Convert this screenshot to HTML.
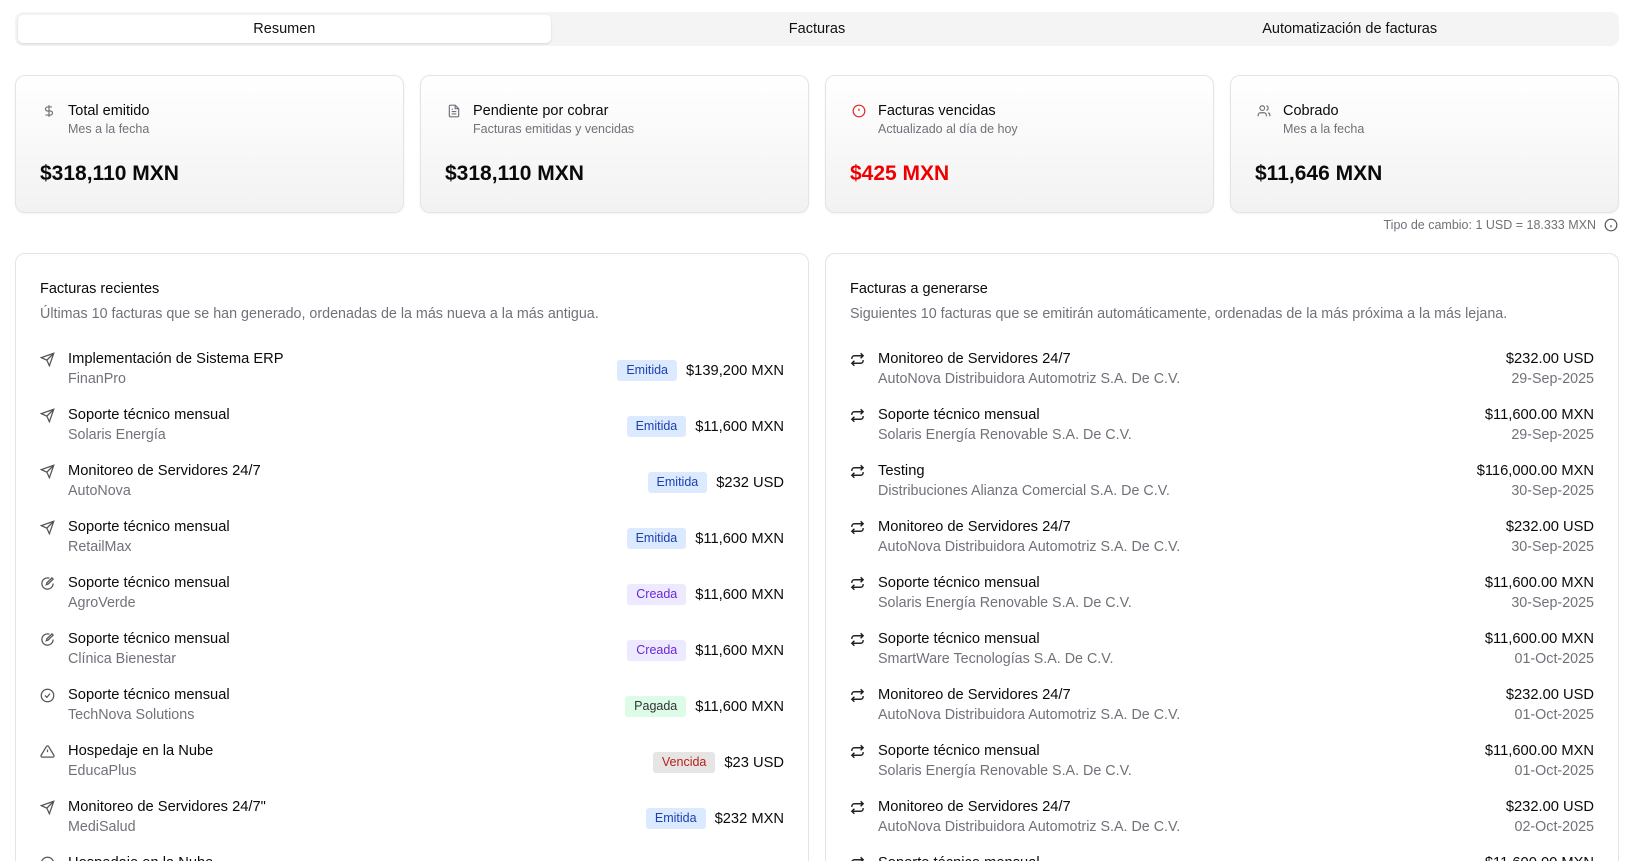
<!DOCTYPE html>
<html><head><meta charset="utf-8"><style>
*{box-sizing:border-box;margin:0;padding:0}
html,body{width:1634px;height:861px;overflow:hidden}
body{background:#fff;font-family:"Liberation Sans",Arial,sans-serif;color:#0a0a0a}
#w{position:relative;width:1634px;height:861px;overflow:hidden}
.tabs{position:absolute;left:15px;top:12px;width:1604px;height:34px;background:#f4f4f5;border-radius:8px;display:flex;padding:3px}
.tab{flex:1;text-align:center;font-size:14.5px;line-height:28px;color:#111}
.tab.active{background:#fff;border-radius:5px;box-shadow:0 1px 2px rgba(0,0,0,.12)}
.card{position:absolute;top:75px;width:389px;height:138px;border:1px solid #e4e4e7;border-radius:10px;background:linear-gradient(#fff,#f2f2f2);box-shadow:0 1px 2px rgba(0,0,0,.05)}
.card .ic{position:absolute;left:26px;top:28px;width:14px;height:14px}
.card .t{position:absolute;left:52px;top:27px;font-size:14.5px}
.card .s{position:absolute;left:52px;top:46px;font-size:12.5px;color:#71717a}
.card .v{position:absolute;left:24px;top:86px;font-size:21px;font-weight:bold}
.fx{position:absolute;right:38px;top:218px;font-size:12.5px;color:#71717a}
.fxi{position:absolute;left:1604px;top:218px}
.panel{position:absolute;top:253px;height:640px;border:1px solid #e4e4e7;border-radius:10px;background:#fff}
.panel h3{position:absolute;left:24px;top:27px;font-size:14.5px;font-weight:normal}
.panel .d{position:absolute;left:24px;top:52px;font-size:14.3px;color:#71717a}
.row{position:absolute;left:24px;right:24px;height:44px}
.row .ri{position:absolute;left:0;top:2px}
.row .a{position:absolute;left:28px;top:0;font-size:14.7px;line-height:18px}
.row .b{position:absolute;left:28px;top:20px;font-size:14.3px;color:#71717a;line-height:18px}
.row .r{position:absolute;right:0;top:10px;display:flex;align-items:center;gap:9px;font-size:14.7px}
.bd{font-size:12.5px;padding:3px 9px;border-radius:3px;line-height:15px}
.em{background:#dbeafe;color:#1e40af}.cr{background:#ede9fe;color:#6d28d9}.pg{background:#dcfce7;color:#333}.vc{background:#e7e5e4;color:#b91c1c}
.row .r2{position:absolute;right:0;top:0;text-align:right;font-size:14.7px;line-height:18px}
.row .r2 span{display:block;color:#71717a;font-size:14.3px;margin-top:2px}
</style></head><body><div id="w">
<div class="tabs"><div class="tab active">Resumen</div><div class="tab">Facturas</div><div class="tab">Automatización de facturas</div></div>

<div class="card" style="left:15px"><svg class="ic" viewBox="0 0 24 24" fill="none" stroke="#71717a" stroke-width="2"><path d="M12 2v20M17 5H9.5a3.5 3.5 0 0 0 0 7h5a3.5 3.5 0 0 1 0 7H6"/></svg><div class="t">Total emitido</div><div class="s">Mes a la fecha</div><div class="v">$318,110 MXN</div></div>
<div class="card" style="left:420px"><svg class="ic" viewBox="0 0 24 24" fill="none" stroke="#71717a" stroke-width="2"><path d="M14 2H6a2 2 0 0 0-2 2v16a2 2 0 0 0 2 2h12a2 2 0 0 0 2-2V8z"/><path d="M14 2v6h6M8 13h8M8 17h8M8 9h2"/></svg><div class="t">Pendiente por cobrar</div><div class="s">Facturas emitidas y vencidas</div><div class="v">$318,110 MXN</div></div>
<div class="card" style="left:825px"><svg class="ic" viewBox="0 0 24 24" fill="none" stroke="#dc2626" stroke-width="2"><circle cx="12" cy="12" r="10"/><path d="M12 8v4M12 16h.01"/></svg><div class="t">Facturas vencidas</div><div class="s">Actualizado al día de hoy</div><div class="v" style="color:#e00">$425 MXN</div></div>
<div class="card" style="left:1230px"><svg class="ic" viewBox="0 0 24 24" fill="none" stroke="#71717a" stroke-width="2"><path d="M16 21v-2a4 4 0 0 0-4-4H6a4 4 0 0 0-4 4v2"/><circle cx="9" cy="7" r="4"/><path d="M22 21v-2a4 4 0 0 0-3-3.9M16 3.1a4 4 0 0 1 0 7.8"/></svg><div class="t">Cobrado</div><div class="s">Mes a la fecha</div><div class="v">$11,646 MXN</div></div>
<div class="fx">Tipo de cambio: 1 USD = 18.333 MXN</div>
<svg class="fxi" width="14" height="14" viewBox="0 0 24 24" fill="none" stroke="#555" stroke-width="2"><circle cx="12" cy="12" r="10"/><path d="M12 16v-4M12 8h.01"/></svg>

<div class="panel" style="left:15px;width:794px">
<h3>Facturas recientes</h3><div class="d">Últimas 10 facturas que se han generado, ordenadas de la más nueva a la más antigua.</div>
<div id="L"></div>
</div>
<div class="panel" style="left:825px;width:794px">
<h3>Facturas a generarse</h3><div class="d">Siguientes 10 facturas que se emitirán automáticamente, ordenadas de la más próxima a la más lejana.</div>
<div id="R"></div>
</div>
</div>
<script>
var send='<svg class="ri" width="15" height="15" viewBox="0 0 24 24" fill="none" stroke="#555" stroke-width="2"><path d="M22 2 11 13M22 2l-7 20-4-9-9-4z"/></svg>';
var pen='<svg class="ri" width="15" height="15" viewBox="0 0 24 24" fill="none" stroke="#555" stroke-width="2"><path d="M21 12a9 9 0 1 1-6-8.5M19 3l2 2-8 8-3 1 1-3z"/></svg>';
var chk='<svg class="ri" width="15" height="15" viewBox="0 0 24 24" fill="none" stroke="#555" stroke-width="2"><circle cx="12" cy="12" r="10"/><path d="m8 12 3 3 5-6"/></svg>';
var warn='<svg class="ri" width="15" height="15" viewBox="0 0 24 24" fill="none" stroke="#555" stroke-width="2"><path d="M10.3 3.9 1.8 18a2 2 0 0 0 1.7 3h17a2 2 0 0 0 1.7-3L13.7 3.9a2 2 0 0 0-3.4 0zM12 9v4M12 17h.01"/></svg>';
var rep='<svg class="ri" width="15" height="15" viewBox="0 0 24 24" fill="none" stroke="#222" stroke-width="2.4"><path d="m17 2 4 4-4 4M3 11v-1a4 4 0 0 1 4-4h14M7 22l-4-4 4-4M21 13v1a4 4 0 0 1-4 4H3"/></svg>';
var L=[[send,"Implementación de Sistema ERP","FinanPro","em","Emitida","$139,200 MXN"],[send,"Soporte técnico mensual","Solaris Energía","em","Emitida","$11,600 MXN"],[send,"Monitoreo de Servidores 24/7","AutoNova","em","Emitida","$232 USD"],[send,"Soporte técnico mensual","RetailMax","em","Emitida","$11,600 MXN"],[pen,"Soporte técnico mensual","AgroVerde","cr","Creada","$11,600 MXN"],[pen,"Soporte técnico mensual","Clínica Bienestar","cr","Creada","$11,600 MXN"],[chk,"Soporte técnico mensual","TechNova Solutions","pg","Pagada","$11,600 MXN"],[warn,"Hospedaje en la Nube","EducaPlus","vc","Vencida","$23 USD"],[send,"Monitoreo de Servidores 24/7\"","MediSalud","em","Emitida","$232 MXN"],[chk,"Hospedaje en la Nube","EducaPlus","pg","Pagada","$23 USD"]];
var h='';L.forEach(function(r,i){h+='<div class="row" style="top:'+(96+i*56)+'px">'+r[0]+'<div class="a">'+r[1]+'</div><div class="b">'+r[2]+'</div><div class="r"><span class="bd '+r[3]+'">'+r[4]+'</span><span>'+r[5]+'</span></div></div>'});
document.getElementById('L').innerHTML=h;
var A="AutoNova Distribuidora Automotriz S.A. De C.V.",S="Solaris Energía Renovable S.A. De C.V.";
var R=[["Monitoreo de Servidores 24/7",A,"$232.00 USD","29-Sep-2025"],["Soporte técnico mensual",S,"$11,600.00 MXN","29-Sep-2025"],["Testing","Distribuciones Alianza Comercial S.A. De C.V.","$116,000.00 MXN","30-Sep-2025"],["Monitoreo de Servidores 24/7",A,"$232.00 USD","30-Sep-2025"],["Soporte técnico mensual",S,"$11,600.00 MXN","30-Sep-2025"],["Soporte técnico mensual","SmartWare Tecnologías S.A. De C.V.","$11,600.00 MXN","01-Oct-2025"],["Monitoreo de Servidores 24/7",A,"$232.00 USD","01-Oct-2025"],["Soporte técnico mensual",S,"$11,600.00 MXN","01-Oct-2025"],["Monitoreo de Servidores 24/7",A,"$232.00 USD","02-Oct-2025"],["Soporte técnico mensual",S,"$11,600.00 MXN","02-Oct-2025"]];
h='';R.forEach(function(r,i){h+='<div class="row" style="top:'+(96+i*56)+'px">'+rep+'<div class="a">'+r[0]+'</div><div class="b">'+r[1]+'</div><div class="r2">'+r[2]+'<span>'+r[3]+'</span></div></div>'});
document.getElementById('R').innerHTML=h;
</script>
</body></html>
